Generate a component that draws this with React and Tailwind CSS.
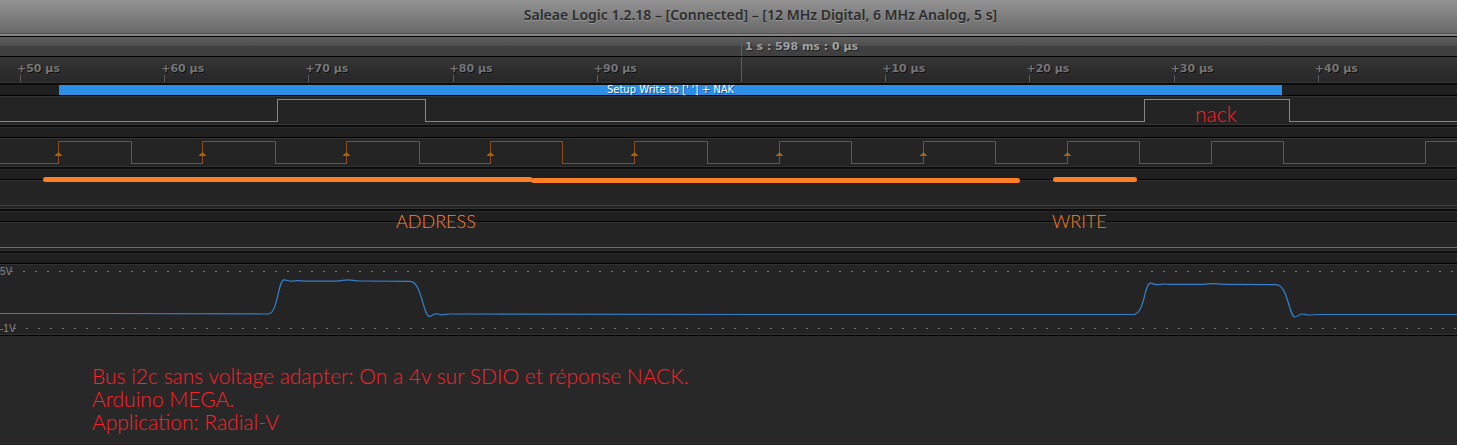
import React from "react";

const TICKS = ["+50 µs", "+60 µs", "+70 µs", "+80 µs", "+90 µs", "", "+10 µs", "+20 µs", "+30 µs", "+40 µs"];

const SDA = "M0 25.5H277.5V3.5H425.5V25.5H1144.5V3.5H1289.5V25.5H1457";
const SCL =
  "M0 25.5H58.5V3.5H131.5V25.5H202.5V3.5H275.5V25.5H346.5V3.5H419.5V25.5H490.5V3.5H562.5V25.5H634.5V3.5H707.5V25.5H779.5V3.5H851.5V25.5H923.5V3.5H995.5V25.5H1067.5V3.5H1139.5V25.5H1211.5V3.5H1283.5V25.5H1425.5V3.5H1457";
const FLAT = "M0 25.5H1457";
const RISING_EDGES = [58, 202, 346, 490, 634, 779, 923, 1067];

const ANALOG =
  "M0 49.5H100L268 50C278 50 278 15.8 284 15.8C287 15.8 288 17.2 291 17.2C294 17.2 295 16.6 298 16.6C301 16.6 303 17.2 307 17.2H336C342 17 343 15.8 348 15.8C353 15.8 354 17 360 17L410 17.4C422 17.4 423 52.4 429.5 52.4C432 52.4 433 49.8 436 49.8C439 49.8 439 50.8 442 50.8C445 50.8 446 50 450 50L760 50.5H1133C1145 50.5 1144 19.2 1150.5 19.2C1153 19.2 1154 20.7 1157 20.7C1160 20.7 1160 20 1164 20L1170 20.4H1203C1208 20.4 1209 19.6 1213 19.6C1217 19.6 1218 20.4 1224 20.4L1276 20.7C1288 20.7 1289 53 1295 53C1298 53 1298 50 1302 50C1305 50 1305 51 1309 51L1320 50.5H1457";

function Lane() {
  return (
    <div className="h-[13px] border-t-2 border-b border-t-[#0c0c0c] border-b-black bg-[#1f1f1f]">
      <div className="h-full border-t border-[#2a2a2a]" />
    </div>
  );
}

function DigitalTrack({ label, path, color, edges = [] }) {
  return (
    <div className="h-[29px] border-y border-[#323232] bg-[#242424]">
      <svg
        role="img"
        aria-label={label}
        className="-mt-px block h-[29px] w-full"
        viewBox="0 0 1457 29"
        preserveAspectRatio="none"
      >
        <path d={path} fill="none" stroke={color} shapeRendering="crispEdges" />
        {edges.map((x) => (
          <path
            key={x}
            d={`M${x} 14h1v1h1v1h1v1h1v1h-7v-1h1v-1h1v-1h1z`}
            fill="#a8600c"
            shapeRendering="crispEdges"
          />
        ))}
      </svg>
    </div>
  );
}

export default function App() {
  return (
    <div className="flex min-h-screen flex-col overflow-hidden bg-[#282828] font-['DejaVu_Sans',sans-serif]">
      <header className="flex h-[37px] justify-center border-b border-black bg-[#858585]">
        <div className="flex h-[34px] w-full justify-center border-b border-[#545454] bg-linear-to-b from-[#949494] to-[#696969] pt-1 pl-16">
          <h1 className="font-['Noto_Sans',sans-serif] text-sm leading-[22px] font-semibold whitespace-nowrap text-[#2d2d2d] [text-shadow:0_1px_0_#999]">
            Saleae Logic 1.2.18 – [Connected] – [12 MHz Digital, 6 MHz Analog, 5 s]
          </h1>
        </div>
      </header>

      <div className="flex h-5 border-b border-black bg-linear-to-b from-[#5e5e5e] from-0% via-[#4c4c4c] via-50% to-[#404040] to-50%">
        <div className="w-[50.86%]" />
        <div className="border-l border-[#606060] pl-[3px] text-[11px] leading-[19px] font-bold whitespace-nowrap text-[#a0a0a0] [text-shadow:1px_1px_0_#222]">
          1 s : 598 ms : 0 µs
        </div>
      </div>

      <div className="-mr-0.5 flex h-[26px] border-b border-[#333] bg-linear-to-b from-[#353535] to-[#272727] pl-[17px]">
        {TICKS.map((label, i) => (
          <div key={i} className="flex min-w-0 flex-1 flex-col justify-between">
            {label ? (
              <>
                <span className="pt-1.5 text-[11px] leading-3 font-bold whitespace-nowrap text-[#757575] [text-shadow:1px_1px_0_#111]">
                  {label}
                </span>
                <span className="ml-[3px] h-[7px] w-px bg-[#5c5c5c]" />
              </>
            ) : (
              <span className="ml-[3px] h-full w-px bg-[#5c5c5c]" />
            )}
          </div>
        ))}
      </div>

      <div className="relative">
        <div className="h-[13px] border-t-2 border-b border-t-[#0c0c0c] border-b-black bg-[#1f1f1f] pr-[12.01%] pl-[4.05%]">
          <div className="h-full bg-[#2b8fe6] text-center text-[10px] leading-[10px] text-white [text-shadow:1px_1px_0_#1c4f80]">
            Setup Write to [' '] + NAK
          </div>
        </div>
        <DigitalTrack label="SDA" path={SDA} color="#868686" />
        <Lane />
        <DigitalTrack label="SCL" path={SCL} color="#8c4f1c" edges={RISING_EDGES} />
        <Lane />
        <DigitalTrack label="Channel 2" path={FLAT} color="#8f1a2b" />
        <Lane />
        <DigitalTrack label="Channel 3" path={FLAT} color="#a8630c" />
        <Lane />

        <svg
          aria-hidden="true"
          className="absolute top-[92px] left-0 h-3 w-full"
          viewBox="0 0 1457 12"
          preserveAspectRatio="none"
        >
          <g stroke="#ff7f27" strokeWidth="5" strokeLinecap="round">
            <path d="M45.5 4.5H530" />
            <path d="M533.5 5.5H1017.5" />
            <path d="M1055.5 4.5H1134.5" />
          </g>
        </svg>
        <p className="absolute top-5 left-[82.02%] font-['Lato',sans-serif] text-[21px] leading-[22px] font-light text-[#ff1f28]">
          nack
        </p>
        <p className="absolute top-[127px] left-[27.18%] font-['Lato',sans-serif] text-lg leading-[22px] font-light text-[#ff7f27]">
          ADDRESS
        </p>
        <p className="absolute top-[127px] left-[72.2%] font-['Lato',sans-serif] text-lg leading-[22px] font-light text-[#ff7f27]">
          WRITE
        </p>
      </div>

      <div className="relative border-b border-black bg-[#242424]">
        <svg
          role="img"
          aria-label="Analog SDA"
          className="block h-[71px] w-full"
          viewBox="0 0 1457 71"
          preserveAspectRatio="none"
        >
          <path d="M0 0.5H1457M0 70.5H1457" stroke="#323232" shapeRendering="crispEdges" />
          <g stroke="#777" strokeDasharray="2 10" shapeRendering="crispEdges">
            <path d="M11 7.5H1457" />
            <path d="M14 64.5H1457" />
          </g>
          <path d={ANALOG} fill="none" stroke="#3580cc" strokeWidth="1.2" />
        </svg>
        <div className="absolute inset-y-0 left-0 flex flex-col justify-between pt-0.5 font-['Liberation_Sans',sans-serif] text-[10px] leading-3 text-[#8a8a8a]">
          <span>5V</span>
          <span>-1V</span>
        </div>
      </div>

      <div className="flex-1 border-b border-[#2c2226] px-[92px] pt-7 font-['Lato',sans-serif] text-[21px] leading-[23px] font-light text-[#ff1f28]">
        <p>Bus i2c sans voltage adapter: On a 4v sur SDIO et réponse NACK.</p>
        <p>Arduino MEGA.</p>
        <p>Application: Radial-V</p>
      </div>
    </div>
  );
}
